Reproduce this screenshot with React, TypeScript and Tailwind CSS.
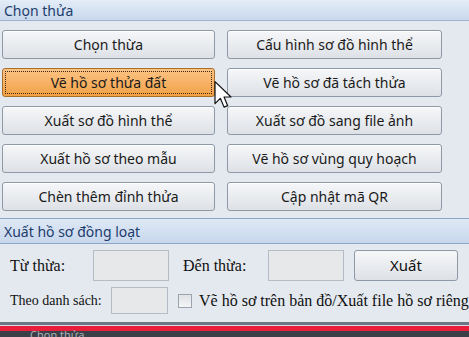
import React from 'react';

const left = ['Chọn thừa', 'Vẽ hồ sơ thửa đất', 'Xuất sơ đồ hình thể', 'Xuất hồ sơ theo mẫu', 'Chèn thêm đỉnh thửa'];
const right = ['Cấu hình sơ đồ hình thể', 'Vẽ hồ sơ đã tách thửa', 'Xuất sơ đồ sang file ảnh', 'Vẽ hồ sơ vùng quy hoạch', 'Cập nhật mã QR'];

function Btn({ label, active }: { label: string; active?: boolean }) {
  if (active) {
    return (
      <div className="h-[29px] rounded-[3px] border border-[#a8702c] bg-gradient-to-b from-[#fbc383] to-[#f2a044] p-[2px]">
        <div className="flex h-full items-center justify-center border border-dotted border-[#3a2a10] text-[14px] text-[#1a1a1a]">
          {label}
        </div>
      </div>
    );
  }
  return (
    <div className="flex h-[29px] items-center justify-center rounded-[3px] border border-[#8e99a8] bg-gradient-to-b from-[#f6f7f9] to-[#dde1e6] text-[14px] text-[#1a1a1a] shadow-[inset_0_1px_0_#ffffff]">
      {label}
    </div>
  );
}

function Cursor() {
  return (
    <svg className="absolute left-[213px] top-[81px]" width="20" height="28" viewBox="0 0 13 21">
      <path d="M0.5 0.5 L0.5 17 L4.5 13 L7.3 19.6 L10 18.5 L7.3 12 L12.5 12 Z" fill="#ffffff" stroke="#111111" strokeWidth="0.9" strokeLinejoin="round" />
    </svg>
  );
}

export default function App() {
  return (
    <div className="relative h-[337px] w-[469px] overflow-hidden bg-[#e4e9ef]" style={{ fontFamily: '"Noto Sans", "DejaVu Sans", sans-serif' }}>
      <div className="flex h-[21px] items-center border-b border-[#9cb3d4] bg-gradient-to-b from-[#e4edf8] to-[#c9d8ec] px-[4px] text-[14px] text-[#1d3c6c]">
        Chọn thửa
      </div>
      <div className="grid grid-cols-[213px_215px] gap-x-[12px] gap-y-[9px] pl-[2px] pt-[9px]">
        {left.map((l, i) => (
          <React.Fragment key={l}>
            <Btn label={l} active={i === 1} />
            <Btn label={right[i]} />
          </React.Fragment>
        ))}
      </div>
      <div className="mt-[7px] flex h-[26px] items-center border-y border-[#8ea6c8] bg-gradient-to-b from-[#dfe9f6] to-[#c7d7ec] px-[4px] text-[14px] text-[#1d3c6c]">
        Xuất hồ sơ đồng loạt
      </div>
      <div className="h-[78px] text-[#101010]" style={{ fontFamily: '"Liberation Serif", serif' }}>
        <div className="flex items-center pt-[6px]">
          <span className="w-[93px] pl-[10px] text-[16px]">Từ thừa:</span>
          <div className="h-[31px] w-[76px] border border-[#b4bcc6] bg-[#e6e8ea]" />
          <span className="w-[99px] pl-[14px] text-[16px]">Đến thừa:</span>
          <div className="h-[31px] w-[76px] border border-[#b4bcc6] bg-[#e6e8ea]" />
          <div className="ml-[10px] flex h-[31px] w-[104px] items-center justify-center rounded-[3px] border border-[#8e99a8] bg-gradient-to-b from-[#f6f7f9] to-[#dde1e6] text-[15px]" style={{ fontFamily: '"Noto Sans", sans-serif' }}>
            Xuất
          </div>
        </div>
        <div className="flex items-center pt-[6px]">
          <span className="w-[111px] pl-[10px] text-[14px]">Theo danh sách:</span>
          <div className="h-[27px] w-[57px] border border-[#b4bcc6] bg-[#e6e8ea]" />
          <div className="ml-[10px] h-[14px] w-[14px] border border-[#9aa3ae] bg-gradient-to-b from-[#dfe2e6] to-[#f4f5f6]" />
          <span className="ml-[7px] whitespace-nowrap text-[16px]">Vẽ hồ sơ trên bản đồ/Xuất file hồ sơ riêng</span>
        </div>
      </div>
      <div className="h-[3px] bg-[#6b7786]" />
      <div className="h-[1px] bg-[#d9dde2]" />
      <div className="h-[5px] bg-[#ea1d3d]" />
      <div className="h-[20px] bg-[#3b4048] pl-[30px] text-[11px] leading-[8px] text-[#aab0b8]">
        Chọn thửa
      </div>
      <Cursor />
    </div>
  );
}
